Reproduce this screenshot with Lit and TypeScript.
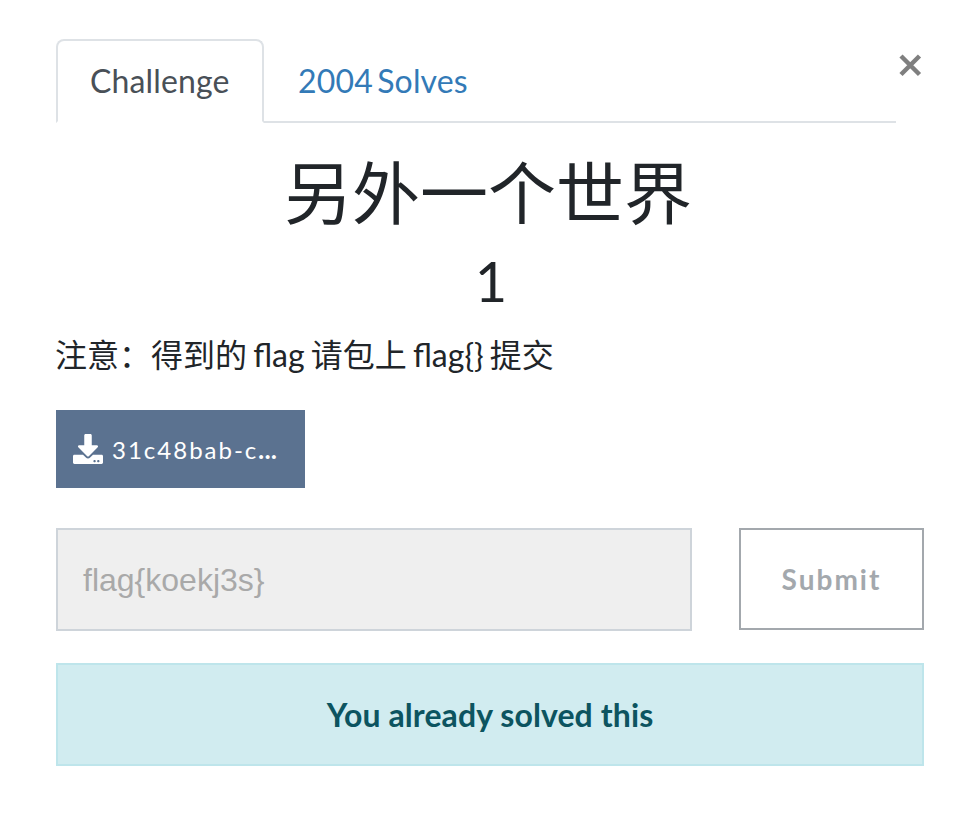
import { LitElement, html, css } from "lit";
import { customElement } from "lit/decorators.js";

@customElement("app-root")
export class AppRoot extends LitElement {
  static styles = css`
    :host { display: block; box-sizing: border-box; width: 964px; height: 824px; overflow: hidden; background: #fff; padding: 39px 40px 0 56px; font-family: Lato, "Noto Sans CJK SC", sans-serif; color: #212529; font-size: 32px; }
    * { box-sizing: border-box; }
    .top { display: flex; height: 84px; }
    .tabs { display: flex; width: 840px; border-bottom: 2px solid #dee2e6; }
    .tab { height: 84px; width: 208px; padding: 0 32px; line-height: 80px; border: 2px solid transparent; white-space: nowrap; color: #337ab7; letter-spacing: 0.15px; word-spacing: -4px; }
    .tab.active { color: #495057; border-color: #dee2e6 #dee2e6 #fff; border-radius: 8px 8px 0 0; background: #fff; }
    .close { width: 28px; height: 52px; display: grid; place-items: center; }
    h2 { margin: 30px 0 0; padding-right: 4px; font-size: 68px; font-weight: 400; line-height: 80px; text-align: center; }
    h3 { margin: 14px 0 0; padding-left: 2px; font-size: 56px; font-weight: 400; line-height: 68px; text-align: center; }
    p { margin: 16px 0 0; line-height: 48px; white-space: nowrap; text-indent: -1px; word-spacing: -2px; }
    .file { margin-top: 31px; width: 249px; height: 78px; background: #5b7290; color: #fff; display: flex; align-items: center; padding-left: 17px; gap: 8px; font-size: 24px; letter-spacing: 2px; }
    .name { display: flex; padding-left: 1px; }
    .more { font-weight: 900; letter-spacing: 0.6px; }
    .form { margin-top: 40px; display: flex; justify-content: space-between; }
    .flag { width: 636px; height: 103px; border: 2px solid #ced4da; background: #efefef; color: #a9a9a9; padding: 0 25px; line-height: 100px; font-family: "Liberation Sans", sans-serif; }
    .submit { width: 185px; height: 102px; border: 2px solid #a3a8ad; background: #fff; color: #a3a8ad; font: 700 28px Lato, sans-serif; letter-spacing: 2px; padding: 0; }
    .alert { margin-top: 32px; height: 103px; border: 2px solid #bee5eb; background: #d1ecf0; color: #0c5460; font-weight: 700; line-height: 100px; letter-spacing: 0.1px; text-align: center; }
  `;
  render() {
    return html`
      <div class="top">
        <nav class="tabs"><div class="tab active">Challenge</div><div class="tab">2004 Solves</div></nav>
        <div class="close"><svg width="24" height="24" viewBox="0 0 24 24"><path d="M3 3 21.500 21.500M21.500 3 3 21.500" stroke="#7f7f7f" stroke-width="4.500"/></svg></div>
      </div>
      <h2>另外一个世界</h2>
      <h3>1</h3>
      <p>注意：得到的 flag 请包上 flag{} 提交</p>
      <div class="file"><svg width="30" height="30" viewBox="0 0 512 512" fill="#fff"><path d="M216 0h80c13.300 0 24 10.700 24 24v168h87.700c17.800 0 26.700 21.500 14.100 34.100L269.700 378.300c-7.500 7.500-19.800 7.500-27.300 0L90.100 226.100c-12.600-12.600-3.700-34.100 14.100-34.100H192V24c0-13.300 10.700-24 24-24zm296 376v112c0 13.300-10.700 24-24 24H24c-13.300 0-24-10.700-24-24V376c0-13.300 10.700-24 24-24h146.700l49 49c20.100 20.100 52.500 20.100 72.600 0l49-49H488c13.300 0 24 10.700 24 24zm-124 88c0-11-9-20-20-20s-20 9-20 20 9 20 20 20 20-9 20-20zm64 0c0-11-9-20-20-20s-20 9-20 20 9 20 20 20 20-9 20-20z"/></svg><span class="name">31c48bab-c<span class="more">...</span></span></div>
      <div class="form"><div class="flag">flag{koekj3s}</div><button class="submit">Submit</button></div>
      <div class="alert">You already solved this</div>
    `;
  }
}
